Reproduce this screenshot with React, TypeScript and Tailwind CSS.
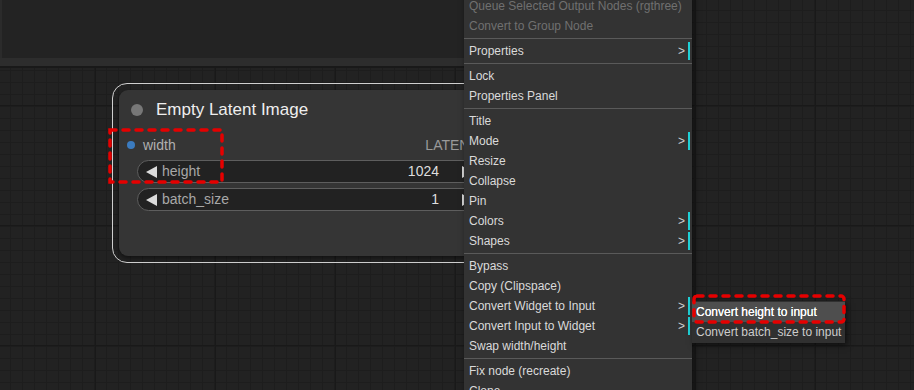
import React from "react";

type Entry = { label: string; disabled?: boolean; sub?: boolean } | "sep";

const entries: Entry[] = [
  { label: "Queue Selected Output Nodes (rgthree)", disabled: true },
  { label: "Convert to Group Node", disabled: true },
  "sep",
  { label: "Properties", sub: true },
  "sep",
  { label: "Lock" },
  { label: "Properties Panel" },
  "sep",
  { label: "Title" },
  { label: "Mode", sub: true },
  { label: "Resize" },
  { label: "Collapse" },
  { label: "Pin" },
  { label: "Colors", sub: true },
  { label: "Shapes", sub: true },
  "sep",
  { label: "Bypass" },
  { label: "Copy (Clipspace)" },
  { label: "Convert Widget to Input", sub: true },
  { label: "Convert Input to Widget", sub: true },
  { label: "Swap width/height" },
  "sep",
  { label: "Fix node (recreate)" },
  { label: "Clone" },
];

function Arrow({ dir }: { dir: "left" | "right" }) {
  return (
    <svg width="12" height="12" viewBox="0 0 12 12" className="shrink-0">
      {dir === "left" ? (
        <polygon points="11,0 11,12 0,6" fill="#dcdcdc" />
      ) : (
        <polygon points="1,0 1,12 12,6" fill="#dcdcdc" />
      )}
    </svg>
  );
}

function NumberWidget({ label, value }: { label: string; value: string }) {
  return (
    <div className="ml-[18px] flex h-[23px] w-[345px] items-center rounded-full border border-[#5e5e5e] bg-[#222222] pl-[8px] pr-[8px] text-[14px]">
      <Arrow dir="left" />
      <span className="ml-[4px] text-[#a8a8a8]">{label}</span>
      <div className="flex-1" />
      <span className="text-[#dedede]">{value}</span>
      <div className="ml-[22px]">
        <Arrow dir="right" />
      </div>
    </div>
  );
}

function LatentNode() {
  return (
    <div className="absolute left-[112px] top-[83px] w-[396px] rounded-[15px] border-[1.5px] border-[#cfcfcf] p-[6px]">
      <div className="h-[166px] rounded-[9px] bg-[#353535] shadow-[0_2px_4px_rgba(0,0,0,0.5)]">
        <div className="flex h-[40px] items-center pl-[12px]">
          <div className="h-[12px] w-[12px] rounded-full bg-[#777777]" />
          <span className="ml-[13px] text-[17px] text-[#eeeeee]">Empty Latent Image</span>
        </div>
        <div className="flex h-[30px] items-center pl-[8px] pr-[8px] text-[14px]">
          <div className="h-[8px] w-[8px] rounded-full bg-[#3b7bbf]" />
          <span className="ml-[8px] text-[#b0b0b0]">width</span>
          <div className="flex-1" />
          <span className="text-[#9a9a9a]">LATENT</span>
          <div className="ml-[7px] h-[8px] w-[8px] rounded-full bg-[#ff9cf9]" />
        </div>
        <div className="flex flex-col gap-[5px]">
          <NumberWidget label="height" value="1024" />
          <NumberWidget label="batch_size" value="1" />
        </div>
      </div>
    </div>
  );
}

function ContextMenu() {
  return (
    <div className="absolute left-[464px] top-[-4px] w-[228px] bg-[#333333] text-[12px] shadow-[2px_0_6px_rgba(0,0,0,0.6)]">
      {entries.map((e, i) =>
        e === "sep" ? (
          <div key={i} className="flex h-[5px] items-center">
            <div className="h-px w-full bg-[#5a5a5a]" />
          </div>
        ) : (
          <div key={i} className="flex h-[20px] items-center pl-[5px]">
            <span className={e.disabled ? "text-[#707070]" : "text-[#dadada]"}>{e.label}</span>
            <div className="flex-1" />
            {e.sub && (
              <>
                <span className="mr-[3px] text-[#cfcfcf]">&gt;</span>
                <div className="mr-[2px] h-[18px] w-[2px] bg-[#1fd0d6]" />
              </>
            )}
          </div>
        )
      )}
    </div>
  );
}

function SubMenu() {
  return (
    <div className="absolute left-[692px] top-[301px] w-[153px] bg-[#303030] py-px text-[12px] shadow-[2px_2px_6px_rgba(0,0,0,0.6)]">
      <div className="flex h-[20px] items-center bg-[#4e4e4e] pl-[4px] text-white [text-shadow:0_0_0.6px_#ffffff]">
        Convert height to input
      </div>
      <div className="flex h-[20px] items-center pl-[4px] text-[#cccccc]">Convert batch_size to input</div>
    </div>
  );
}

export default function App() {
  return (
    <div
      className="relative h-[390px] w-[914px] overflow-hidden bg-[#222222] bg-[linear-gradient(to_right,#191919_1px,transparent_1px),linear-gradient(to_bottom,#191919_1px,transparent_1px),linear-gradient(to_right,#1d1d1d_1px,transparent_1px),linear-gradient(to_bottom,#1d1d1d_1px,transparent_1px)] bg-[size:120px_120px,120px_120px,12px_12px,12px_12px] bg-[position:95px_105px,95px_105px,10px_10px,10px_10px]"
      style={{ fontFamily: '"Liberation Sans", Arial, sans-serif' }}
    >
      <div className="w-[470px]">
        <div className="h-[58px] border-l-2 border-[#2b2b2b] bg-[#232323]" />
        <div className="h-[8px] bg-[#2d2d2d]" />
        <div className="h-[2px] bg-[#191919]" />
      </div>

      <LatentNode />
      <ContextMenu />
      <SubMenu />

      <svg className="pointer-events-none absolute left-0 top-0" width="914" height="390">
        <rect x="110" y="130" width="112" height="52" fill="none" stroke="#e60000" strokeWidth="3.5" strokeDasharray="6 7" strokeLinecap="round" />
        <rect x="694" y="296" width="150" height="26" rx="3" fill="none" stroke="#e60000" strokeWidth="3.5" strokeDasharray="6 7" strokeLinecap="round" />
      </svg>
    </div>
  );
}
